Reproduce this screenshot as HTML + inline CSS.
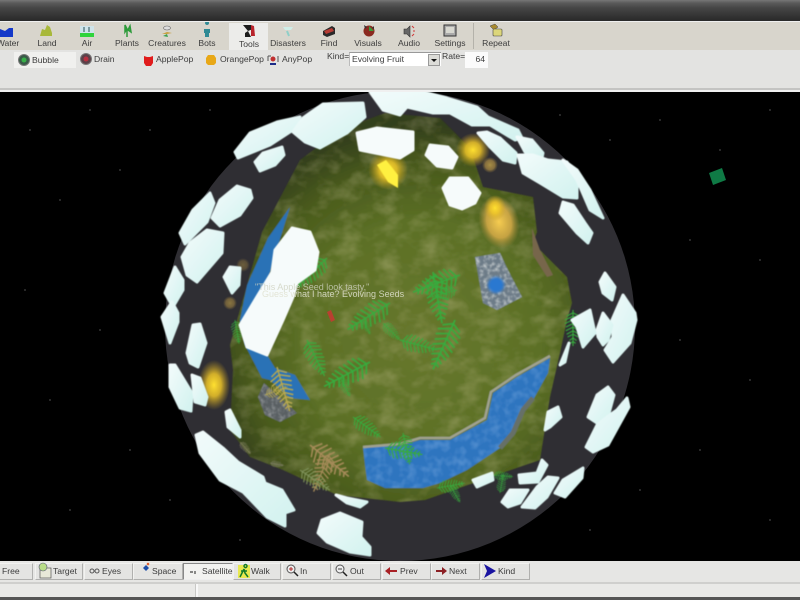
<!DOCTYPE html>
<html><head><meta charset="utf-8">
<style>
html,body{margin:0;padding:0;background:#000}
#r{position:relative;width:800px;height:600px;overflow:hidden;background:#000;font-family:"Liberation Sans",sans-serif;font-size:8.6px;color:#3c3c3c;filter:blur(.35px)}
#r>div,#r>svg{position:absolute}
.t{position:absolute;white-space:nowrap;transform:translateX(-50%);top:38px}
.l{position:absolute;white-space:nowrap}
.b{position:absolute;top:563px;height:17px;box-sizing:border-box;background:#e4e4e2;border:1px solid;border-color:#f2f2f0 #b0b0ae #b0b0ae #f2f2f0}
</style></head><body><div id="r">

<svg style="left:0;top:92px" width="800" height="470" viewBox="0 92 800 470">
<defs>
<radialGradient id="land" gradientUnits="userSpaceOnUse" cx="420" cy="340" r="215">
<stop offset="0" stop-color="#68782e"/><stop offset=".55" stop-color="#5c7026"/><stop offset=".82" stop-color="#48591c"/><stop offset="1" stop-color="#333f1a"/></radialGradient>
<radialGradient id="glow"><stop offset="0" stop-color="#ffe030"/><stop offset=".45" stop-color="#eec528" stop-opacity=".85"/><stop offset="1" stop-color="#c8a020" stop-opacity="0"/></radialGradient>
<radialGradient id="glow2"><stop offset="0" stop-color="#f6cc50"/><stop offset=".6" stop-color="#d8ac48" stop-opacity=".85"/><stop offset="1" stop-color="#b09040" stop-opacity="0"/></radialGradient>
<filter id="tex" x="0" y="0" width="100%" height="100%"><feTurbulence type="fractalNoise" baseFrequency=".05 .07" numOctaves="3" seed="4"/><feColorMatrix values="0 0 0 0 .66  0 0 0 0 .6  0 0 0 0 .34  1.7 0 0 0 -.72"/><feComposite in2="SourceGraphic" operator="in"/></filter>
<filter id="wtex" x="0" y="0" width="100%" height="100%"><feTurbulence type="fractalNoise" baseFrequency=".12" numOctaves="2" seed="8"/><feColorMatrix values="0 0 0 0 .45  0 0 0 0 .65  0 0 0 0 .95  1.5 0 0 0 -.6"/><feComposite in2="SourceGraphic" operator="in"/></filter>
<filter id="rtex" x="0" y="0" width="100%" height="100%"><feTurbulence type="fractalNoise" baseFrequency=".25" numOctaves="2" seed="3"/><feColorMatrix values="0 0 0 0 .85  0 0 0 0 .87  0 0 0 0 .85  2.4 0 0 0 -1"/><feComposite in2="SourceGraphic" operator="in"/></filter>
<filter id="s"><feGaussianBlur stdDeviation=".5"/></filter>
<filter id="s2"><feGaussianBlur stdDeviation="1.2"/></filter>
<linearGradient id="ice" x1="0" y1="0" x2="1" y2="1"><stop offset="0" stop-color="#f2fbfb"/><stop offset="1" stop-color="#d2f2ef"/></linearGradient>
<path id="fern" fill="none" d="M0 0H40M3 0l4-7M3 0l4 7M7 0l4-9M7 0l4 9M11 0l4-9M11 0l4 9M15 0l4-8M15 0l4 8M19 0l4-8M19 0l4 8M23 0l4-7M23 0l4 7M27 0l3-6M27 0l3 6M31 0l3-4M31 0l3 4M35 0l2-3M35 0l2 3"/>
</defs>
<rect x="0" y="92" width="800" height="470" fill="#000"/>
<g fill="#8a8a8a">
<circle cx="30" cy="130" r=".6"/><circle cx="90" cy="110" r=".6"/><circle cx="60" cy="200" r=".6"/><circle cx="120" cy="170" r=".6"/><circle cx="25" cy="290" r=".6"/><circle cx="100" cy="330" r=".6"/><circle cx="50" cy="400" r=".6"/><circle cx="130" cy="450" r=".6"/><circle cx="70" cy="510" r=".6"/><circle cx="170" cy="500" r=".6"/><circle cx="240" cy="540" r=".6"/><circle cx="660" cy="120" r=".6"/><circle cx="720" cy="150" r=".6"/><circle cx="770" cy="110" r=".6"/><circle cx="690" cy="240" r=".6"/><circle cx="760" cy="260" r=".6"/><circle cx="680" cy="340" r=".6"/><circle cx="750" cy="380" r=".6"/><circle cx="700" cy="450" r=".6"/><circle cx="640" cy="490" r=".6"/><circle cx="770" cy="520" r=".6"/><circle cx="590" cy="530" r=".6"/><circle cx="210" cy="110" r=".6"/><circle cx="150" cy="130" r=".6"/><circle cx="560" cy="115" r=".6"/><circle cx="610" cy="140" r=".6"/>
</g>
<polygon points="709,173 722,168 726,180 713,185" fill="#0f7a45"/>
<circle cx="400" cy="326" r="235" fill="#2f2e33"/>

<g filter="url(#s)">
<polygon points="385,113 440,118 470,148 483,187 533,197 537,232 533,243 567,277 572,303 567,320 560,353 550,397 540,460 505,472 425,500 400,502 337,495 283,470 250,457 230,430 233,370 230,345 262,232 300,160 340,130" fill="url(#land)"/>
<polygon points="385,113 440,118 470,148 483,187 533,197 537,232 533,243 567,277 572,303 567,320 560,353 550,397 540,460 505,472 425,500 400,502 337,495 283,470 250,457 230,430 233,370 230,345 262,232 300,160 340,130" fill="#000" filter="url(#tex)" opacity=".38"/>
<polygon points="532,228 540,250 553,275 547,277 533,255" fill="#77664c"/>

<polygon points="290,207 268,238 247,285 240,320 245,345 255,345 262,300 275,255" fill="#2a72b6"/>
<polygon points="245,345 260,350 267,355 275,368 295,375 310,400 290,398 270,380 262,378" fill="#2a72b6"/>
<polygon points="264,383 283,400 297,413 280,422 265,415 258,397" fill="#5a6064"/>
<polygon points="264,383 283,400 297,413 280,422 265,415 258,397" filter="url(#rtex)" opacity=".35"/>
<polygon points="363,447 400,446 420,440 450,440 487,420 493,393 517,377 550,358 548,373 533,400 523,410 513,433 500,448 467,470 440,483 423,488 385,488 367,480 365,465" fill="#2d74bf"/>
<polygon points="363,447 400,446 420,440 450,440 487,420 493,393 517,377 550,358 548,373 533,400 523,410 513,433 500,448 467,470 440,483 423,488 385,488 367,480 365,465" filter="url(#wtex)" opacity=".4"/>
<polyline points="363,447 400,444 420,438 450,438 485,418 491,392 516,375 550,356" fill="none" stroke="#a0a290" stroke-width="2.5"/>
<polyline points="500,448 513,433 523,410 533,398" fill="none" stroke="#667068" stroke-width="5"/>
<polygon points="475,257 500,253 508,270 522,297 497,310 483,303" fill="#6d7c88"/>
<polygon points="475,257 500,253 508,270 522,297 497,310 483,303" filter="url(#rtex)" opacity=".6"/>
<circle cx="496" cy="285" r="8" fill="#2b78d0" filter="url(#s2)"/>
</g>

<g filter="url(#s)" stroke="#37ab3e" stroke-width="1.25">
<use href="#fern" transform="translate(327 258) rotate(136) scale(1.05)"/>
<use href="#fern" transform="translate(390 303) rotate(148) scale(1.25)"/>
<use href="#fern" transform="translate(433 272) rotate(80) scale(1.3)"/>
<use href="#fern" transform="translate(460 275) rotate(160) scale(1.25)"/>
<use href="#fern" transform="translate(457 290) rotate(165) scale(.7)"/>
<use href="#fern" transform="translate(455 320) rotate(114) scale(1.35)"/>
<use href="#fern" transform="translate(400 340) rotate(15) scale(.95)"/>
<use href="#fern" transform="translate(383 323) rotate(45) scale(.6)"/>
<use href="#fern" transform="translate(307 340) rotate(64)"/>
<use href="#fern" transform="translate(370 362) rotate(152) scale(1.3)"/>
<use href="#fern" transform="translate(340 377) rotate(63) scale(.55)"/>
<use href="#fern" transform="translate(353 417) rotate(36) scale(.85)"/>
<use href="#fern" transform="translate(363 320) rotate(63) scale(.4)"/>
<use href="#fern" transform="translate(403 433) rotate(78) scale(.8)"/>
<use href="#fern" transform="translate(385 448) rotate(10) scale(.95)"/>
<use href="#fern" transform="translate(437 488) rotate(-10) scale(.7)"/>
<use href="#fern" transform="translate(450 485) rotate(60) scale(.5)"/>
<use href="#fern" transform="translate(493 475) rotate(5) scale(.5)"/>
<use href="#fern" transform="translate(500 493) rotate(-80) scale(.5)"/>
<use href="#fern" transform="translate(573 310) rotate(90) scale(.9)"/>
<use href="#fern" transform="translate(235 320) rotate(80) scale(.6)"/>
</g>
<g filter="url(#s)" stroke="#a58a58" stroke-width="1.25">
<use href="#fern" transform="translate(310 445) rotate(39) scale(1.25)"/>
<use href="#fern" transform="translate(330 453) rotate(113) scale(1.05)"/>
<use href="#fern" stroke="#7d9058" transform="translate(300 470) rotate(34) scale(.9)"/>
<use href="#fern" stroke="#8d8a78" transform="translate(270 463) rotate(10) scale(.35)"/>
<use href="#fern" stroke="#8d8a68" transform="translate(240 442) rotate(48) scale(.4)"/>
<use href="#fern" stroke="#b8a850" transform="translate(277 367) rotate(74) scale(1.15)"/>
<use href="#fern" stroke="#b8a850" transform="translate(265 395) rotate(-20) scale(.6)"/>
</g>

<circle cx="388" cy="170" r="20" fill="url(#glow)"/>
<polygon points="377,165 386,160 398,175 398,188 388,182" fill="#fff040" filter="url(#s)"/>
<circle cx="473" cy="150" r="17" fill="url(#glow)"/>
<circle cx="490" cy="165" r="8" fill="url(#glow2)" opacity=".6"/>
<ellipse cx="499" cy="222" rx="20" ry="27" fill="url(#glow2)" transform="rotate(-15 499 222)"/>
<ellipse cx="495" cy="208" rx="11" ry="13" fill="url(#glow)"/>
<ellipse cx="214" cy="385" rx="16" ry="25" fill="url(#glow)"/>
<circle cx="230" cy="303" r="7" fill="url(#glow2)" opacity=".45"/>
<circle cx="243" cy="265" r="7" fill="url(#glow2)" opacity=".3"/>

<g fill="url(#ice)" stroke="url(#ice)" stroke-width="3" stroke-linejoin="round" filter="url(#s)">
<polygon points="235,152 250,133 277,122 300,117 293,130 270,145 238,158"/>
<polygon points="310,113 323,104 363,103 365,117 347,133 320,148 305,142 293,132 303,118"/>
<polygon points="255,162 263,153 282,147 284,155 275,165 260,171"/>
<polygon points="212,218 220,200 237,186 250,190 252,198 240,215 220,226"/>
<polygon points="180,233 193,210 210,193 214,203 207,222 185,244"/>
<polygon points="182,257 190,243 207,230 223,233 222,253 197,282 187,275"/>
<polygon points="224,277 230,267 240,268 239,285 232,293"/>
<polygon points="165,293 175,267 183,280 183,290 173,307"/>
<polygon points="162,317 172,302 178,313 178,322 170,343"/>
<polygon points="370,92 400,92 423,92 447,98 477,107 488,117 518,130 522,138 515,140 490,125 472,125 450,113 433,113 407,107 400,115 383,110"/>
<polygon points="478,133 487,132 500,138 516,153 515,163 503,160 490,147"/>
<polygon points="517,137 532,140 543,153 542,158 525,152"/>
<polygon points="518,155 533,155 548,160 567,162 577,178 577,198 563,197 540,183 523,173"/>
<polygon points="563,160 577,170 590,190 603,218 590,210 577,180"/>
<polygon points="560,213 563,202 573,205 585,223 592,233 588,243 577,233"/>
<polygon points="600,282 605,273 615,287 612,300 603,293"/>
<polygon points="612,320 623,295 635,313 636,320 630,343 613,362 605,350 613,337"/>
<polygon points="597,330 603,313 612,325 608,340 603,345 598,337"/>
<polygon points="572,320 590,310 595,333 583,347 577,327"/>
<polygon points="588,417 597,395 608,387 614,395 608,417 597,423"/>
<polygon points="617,410 627,398 629,407 608,445 593,452 586,447 597,425 607,417"/>
<polygon points="555,493 563,480 583,468 582,478 565,497"/>
<polygon points="522,507 537,487 548,477 558,478 547,497 535,508"/>
<polygon points="502,502 510,490 528,490 520,503 508,507"/>
<polygon points="519,475 537,473 542,460 547,465 538,482 520,483"/>
<polygon points="545,430 548,412 558,407 561,417 550,427"/>
<polygon points="473,480 492,473 493,480 477,487"/>
<polygon points="560,365 569,343 565,362"/>
<polygon points="187,353 193,325 200,324 206,343 198,367 190,363"/>
<polygon points="170,365 175,365 192,393 191,411 180,408 170,387"/>
<polygon points="192,375 200,378 207,397 205,405 195,402"/>
<polygon points="226,412 230,410 240,430 240,437 228,427"/>
<polygon points="196,435 203,432 223,448 238,462 263,477 265,483 282,490 294,510 285,513 285,526 267,517 243,492 220,480 200,453"/>
<polygon points="318,533 322,520 340,513 362,522 361,537 370,547 370,555 350,552 327,542"/>
<polygon points="336,495 347,498 367,502 360,507 347,503"/>
</g>
<g fill="#f6fbfb" stroke="#f6fbfb" stroke-width="3" stroke-linejoin="round" filter="url(#s)">
<polygon points="357,133 377,128 413,132 413,150 400,158 360,150"/>
<polygon points="426,155 430,145 448,147 457,157 452,168 437,166"/>
<polygon points="443,188 450,178 468,178 480,193 475,203 462,209 450,205"/>
<polygon points="240,325 258,295 272,272 275,250 292,228 310,232 318,252 315,270 297,283 293,297 283,320 267,355 247,347"/>
</g>
<polygon points="327,312 331,310 335,320 331,322" fill="#b84030"/>
<text x="255" y="290" font-family="Liberation Sans, sans-serif" font-size="9" fill="#cfd2c0" opacity=".8">"This Apple Seed look tasty."</text>
<text x="262" y="297" font-family="Liberation Sans, sans-serif" font-size="9" fill="#e0e2d0" opacity=".85">Guess what I hate? Evolving Seeds</text>
</svg>

<!-- top -->
<div style="left:0;top:0;width:800px;height:21px;background:linear-gradient(#777 0,#5a5a5a 3px,#454545 8px,#2b2b2b 20px)"></div>
<div style="left:0;top:21px;width:800px;height:30px;background:#d8d5cc;border-top:1px solid #efefef;box-sizing:border-box"></div>
<div style="left:0;top:50px;width:800px;height:39px;background:#e3e3e1"></div>
<div style="left:0;top:88px;width:800px;height:2px;background:#c4c4c2"></div>
<div style="left:0;top:90px;width:800px;height:2px;background:#f0f0f0"></div>
<div style="left:229px;top:23px;width:39px;height:27px;background:#ececea"></div>
<div style="left:473px;top:23px;width:1px;height:26px;background:#b4b2aa"></div>
<div style="left:14px;top:52px;width:62px;height:16px;background:#f0f0ee"></div>

<svg style="left:0;top:22px" width="520" height="28" viewBox="0 22 520 28">
<path d="M0 29L5 31L9 28L13 28V37H0Z" fill="#1438c8"/>
<path d="M40 36L42 29L45 30L47 25L50 27L52 33V36Z" fill="#a8b83a"/>
<rect x="80" y="26" width="14" height="7" fill="#cfe4ea"/><rect x="80" y="33" width="14" height="4" fill="#2fd43c"/><path d="M83 27h2v5h-2zM88 27h2v5h-2z" fill="#7a9aa0"/>
<path d="M125 25l2 4-2 3zM130 26l-2 4 3 2zM127 30v7" stroke="#2d9a3a" fill="#3cbc4c" stroke-width="1.5"/>
<ellipse cx="167" cy="28" rx="3.5" ry="2" fill="#ddd" stroke="#666" stroke-width=".6"/><path d="M162 34l5-2 5 1-5 1z" fill="#c8a040"/><path d="M163 36l4-2 1 3z" fill="#3aa050"/>
<path d="M207 25a2 2 0 1 1 .1 0zM204 29h6v4h-1v4h-4v-4h-1z" fill="#2f8a94"/>
<path d="M243 25h8l2 4-5 2zM245 33l3-2 3 6h-6z" fill="#1c1c1c"/><path d="M251 25l3 1 1 10h-4z" fill="#b8242c"/>
<path d="M283 27h10l-2 3h-6z" fill="#cfeee8"/><path d="M287 31l2 5" stroke="#8fcfc8" stroke-width="2"/>
<path d="M323 31l9-5 3 2v6l-8 3-4-2z" fill="#2a2a2a"/><path d="M324 31l8-3 2 3-8 3z" fill="#b83c34"/>
<circle cx="369" cy="31" r="5.5" fill="#8a2a20"/><path d="M369 26l5 5h-5z" fill="#3a9a3a"/><path d="M364 25l3 2-2 2zM374 26l-2 2 2 1z" fill="#333"/>
<path d="M404 29h3l3-3v11l-3-3h-3z" fill="#666" stroke="#333" stroke-width=".6"/><path d="M412 26l2 2M413 31h2M412 36l2-2" stroke="#d03838" stroke-width="1"/>
<rect x="444" y="25" width="12" height="11" fill="#aaa" stroke="#333"/><rect x="446" y="27" width="8" height="6" fill="#d8d8d0"/>
<path d="M490 26l5-2 3 3-4 3z" fill="#a88a30" stroke="#444" stroke-width=".5"/><rect x="493" y="29" width="9" height="7" rx="1" fill="#dcd67a" stroke="#444" stroke-width=".6"/>
</svg>
<div class="t" style="left:8px">Water</div><div class="t" style="left:47px">Land</div><div class="t" style="left:87px">Air</div><div class="t" style="left:127px">Plants</div><div class="t" style="left:167px">Creatures</div><div class="t" style="left:207px">Bots</div><div class="t" style="left:249px;top:39px">Tools</div><div class="t" style="left:288px">Disasters</div><div class="t" style="left:329px">Find</div><div class="t" style="left:368px">Visuals</div><div class="t" style="left:409px">Audio</div><div class="t" style="left:450px">Settings</div><div class="t" style="left:496px">Repeat</div>

<svg style="left:0;top:50px" width="300" height="20" viewBox="0 50 300 20">
<circle cx="24" cy="60" r="5.5" fill="#3a5a48" stroke="#777"/><circle cx="24" cy="60" r="2.5" fill="#38b048"/>
<circle cx="86" cy="59" r="5.5" fill="#5c4048" stroke="#777"/><circle cx="86" cy="59" r="2.5" fill="#b83040"/>
<path d="M144 56l3 1h3l3-1v7l-2 3h-5l-2-3z" fill="#e01c1c"/>
<path d="M206 58l2-3h6l2 3v5l-2 2h-6l-2-2z" fill="#e8a818"/>
<path d="M268 56h3M268 56v5M278 56v6" stroke="#555" fill="none"/><circle cx="273" cy="59" r="2.5" fill="#c03030"/><path d="M270 65h6v-2h-6z" fill="#1c2c88"/>
</svg>
<div class="l" style="left:32px;top:55px">Bubble</div><div class="l" style="left:94px;top:54px">Drain</div><div class="l" style="left:156px;top:54px">ApplePop</div><div class="l" style="left:220px;top:54px">OrangePop</div><div class="l" style="left:282px;top:54px">AnyPop</div>
<div class="l" style="left:327px;top:51px">Kind=</div><div class="l" style="left:442px;top:51px">Rate=</div>
<div style="left:349px;top:52px;width:92px;height:14px;background:#fff;border-top:1px solid #999;border-left:1px solid #bbb;box-sizing:border-box"><span class="l" style="left:2px;top:1px">Evolving Fruit</span></div>
<div style="left:428px;top:54px;width:12px;height:12px;background:#dcdcd8;border:1px solid #999;box-sizing:border-box"></div>
<div style="left:431px;top:59px;width:0;height:0;border:3px solid transparent;border-top:3px solid #111;border-bottom:0"></div>
<div style="left:465px;top:52px;width:23px;height:16px;background:#fbfbfb"><span class="l" style="right:3px;top:2px">64</span></div>

<!-- bottom -->
<div style="left:0;top:561px;width:800px;height:22px;background:#e6e6e4"></div>
<div style="left:0;top:582px;width:800px;height:2px;background:#cfcfcd"></div>
<div style="left:0;top:584px;width:800px;height:13px;background:#e9e9e7"></div>
<div style="left:195px;top:584px;width:2px;height:13px;background:#f8f8f8;border-left:1px solid #c8c8c6"></div>
<div style="left:0;top:597px;width:800px;height:3px;background:#555"></div>

<div class="b" style="left:-10px;width:43px"></div>
<div class="b" style="left:35px;width:48px"></div>
<div class="b" style="left:84px;width:49px"></div>
<div class="b" style="left:133px;width:50px"></div>
<div class="b" style="left:183px;width:50px;background:#f2f2f0;border-color:#888 #eee #eee #888"></div>
<div class="b" style="left:233px;width:48px"></div>
<div class="b" style="left:282px;width:49px"></div>
<div class="b" style="left:332px;width:49px"></div>
<div class="b" style="left:382px;width:49px"></div>
<div class="b" style="left:431px;width:49px"></div>
<div class="b" style="left:481px;width:49px"></div>

<svg style="left:0;top:560px" width="540" height="24" viewBox="0 560 540 24">
<rect x="40" y="568" width="11" height="10" fill="#e8e8d8" stroke="#555" stroke-width=".7"/><circle cx="43" cy="567" r="4" fill="#b8dc88" stroke="#557" stroke-width=".6"/>
<circle cx="92" cy="571" r="2" fill="none" stroke="#555"/><circle cx="97" cy="571" r="2" fill="none" stroke="#555"/>
<circle cx="148" cy="564" r="1.3" fill="#e06030"/><path d="M143 568l3-3 3 3-3 3z" fill="#1c4ca8"/>
<path d="M190 572h3M195 571v3" stroke="#444" stroke-width="1.2"/>
<rect x="238" y="565" width="12" height="13" fill="#e8e850"/><path d="M244 566a1.5 1.5 0 1 1 0 .1zM244 569l-2 4-2 4M244 569l1 4 3 4M241 571h6" stroke="#117a2c" stroke-width="1.5" fill="none"/>
<circle cx="291" cy="569" r="4" fill="#eee" stroke="#555"/><path d="M294 572l4 4" stroke="#222" stroke-width="1.5"/><path d="M289 569h4M291 567v4" stroke="#b02828"/>
<circle cx="340" cy="569" r="4" fill="#eee" stroke="#555"/><path d="M343 572l4 4" stroke="#222" stroke-width="1.5"/><path d="M338 569h4" stroke="#444"/>
<path d="M385 571l5-4v3h7v2h-7v3z" fill="#a82024"/>
<path d="M447 571l-5-4v3h-6v2h6v3z" fill="#8c2024"/>
<path d="M484 564l12 7-12 7 3-7z" fill="#1a14a0"/>
</svg>
<div class="l" style="left:2px;top:566px">Free</div><div class="l" style="left:53px;top:566px">Target</div><div class="l" style="left:102px;top:566px">Eyes</div><div class="l" style="left:152px;top:566px">Space</div><div class="l" style="left:202px;top:566px">Satellite</div><div class="l" style="left:251px;top:566px">Walk</div><div class="l" style="left:300px;top:566px">In</div><div class="l" style="left:350px;top:566px">Out</div><div class="l" style="left:400px;top:566px">Prev</div><div class="l" style="left:449px;top:566px">Next</div><div class="l" style="left:498px;top:566px">Kind</div>
</div></body></html>
